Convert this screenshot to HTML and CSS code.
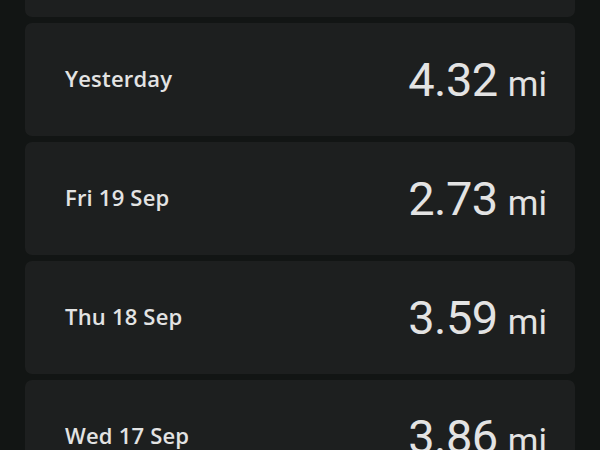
FILE: index.html
```html
<!DOCTYPE html>
<html>
<head>
<meta charset="utf-8">
<link rel="stylesheet" href="styles.css">
</head>
<body>
<div class="list">
  <div class="card"></div>
  <div class="card"><span class="label">Yesterday</span><span class="value">4.32<span class="unit">mi</span></span></div>
  <div class="card"><span class="label">Fri 19 Sep</span><span class="value">2.73<span class="unit">mi</span></span></div>
  <div class="card"><span class="label">Thu 18 Sep</span><span class="value">3.59<span class="unit">mi</span></span></div>
  <div class="card"><span class="label">Wed 17 Sep</span><span class="value">3.86<span class="unit">mi</span></span></div>
</div>
</body>
</html>
```
FILE: styles.css
```css
html, body {
  margin: 0;
  padding: 0;
  background: #121514;
  height: 100%;
  overflow: hidden;
}
body {
  font-family: Roboto, "Noto Sans", sans-serif;
  color: #e3e3e3;
}
.list {
  display: flex;
  flex-direction: column;
  gap: 6px;
  padding: 0 25px;
  margin-top: -96px;
}
.card {
  height: 113px;
  flex: none;
  background: #1d1f1f;
  border-radius: 7px;
  display: flex;
  align-items: center;
  justify-content: space-between;
  padding: 0 28px 0 40px;
  box-sizing: border-box;
}
.label {
  font-family: "Open Sans", Roboto, sans-serif;
  font-size: 22px;
  font-weight: 550;
  letter-spacing: 0.2px;
  color: #e3e3e3;
  margin-top: -3px;
}
.value {
  font-size: 47px;
  font-weight: 400;
  letter-spacing: -0.5px;
  display: flex;
  align-items: baseline;
  gap: 10px;
}
.unit {
  font-size: 35px;
  letter-spacing: 0;
}
```
